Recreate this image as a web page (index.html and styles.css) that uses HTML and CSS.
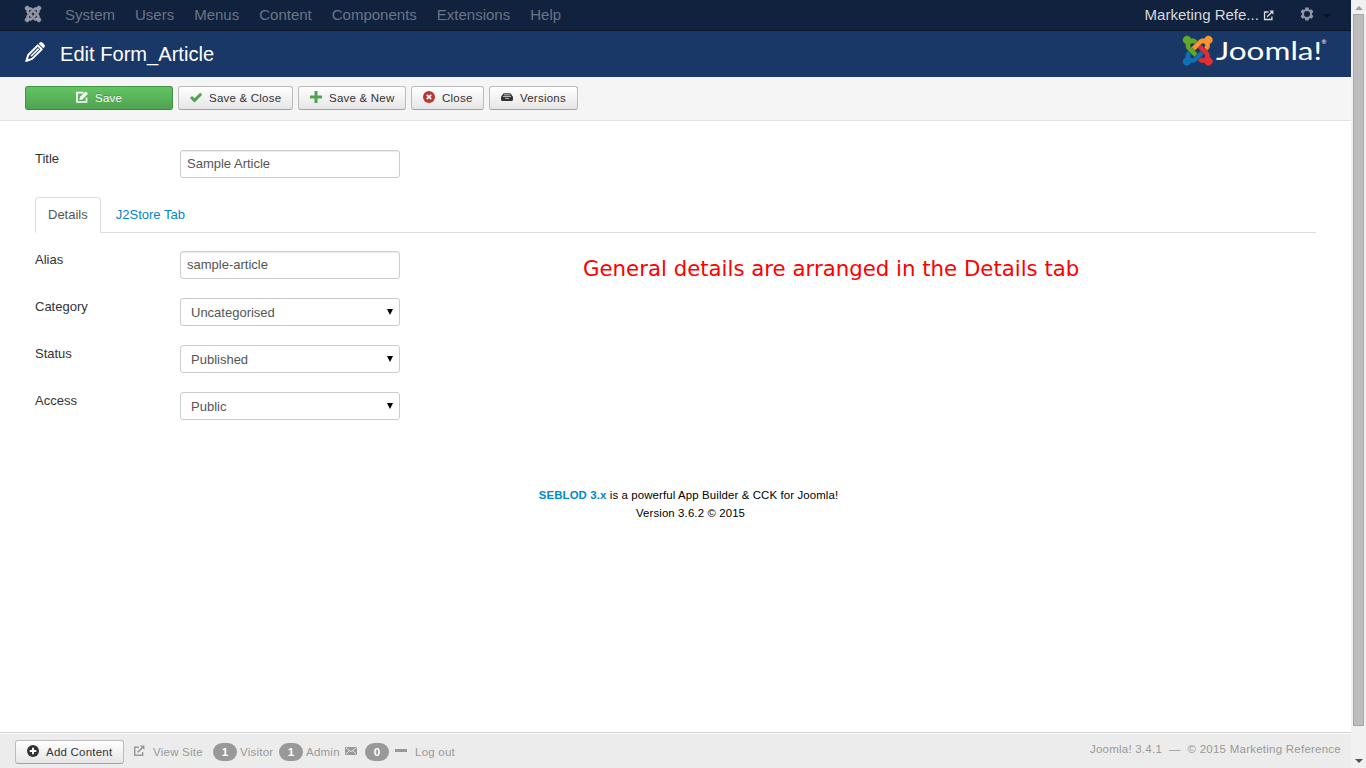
FILE: index.html
```html
<!DOCTYPE html>
<html lang="en">
<head>
<meta charset="utf-8">
<title>Edit Form_Article</title>
<link rel="stylesheet" href="styles.css">
</head>
<body>
<svg width="0" height="0" class="defs">
  <defs>
    <path id="arm" d="M16.72 14.76L14.22 17.26l-2.37 2.37-.46.47c-1.37 1.36-3.3 1.83-5.05 1.4-.33 1.42-1.6 2.49-3.13 2.49C1.44 23.98 0 22.55 0 20.77c0-1.52 1.05-2.79 2.47-3.12-.45-1.76.01-3.7 1.4-5.08l.18-.18 2.37 2.37-.19.18c-.77.78-.77 2.02 0 2.79.77.78 2.02.78 2.79 0l.46-.46 2.37-2.37 2.5-2.51z"/>
    <g id="external" fill="none" stroke="currentColor" stroke-width="1.5"><path d="M6 2.2H1.7v8.1h8V7.2M4.6 7.4L10 2"/><path d="M6.9.6h4.5v4.5z" fill="currentColor" stroke="none"/></g>
  </defs>
</svg>
<div class="window">
  <div class="page">
    <nav class="navbar">
      <svg class="brand" viewBox="0 0 24 24" fill="currentColor" stroke="currentColor" stroke-width=".9"><use href="#arm"/><use href="#arm" transform="rotate(90 12 12)"/><use href="#arm" transform="rotate(180 12 12)"/><use href="#arm" transform="rotate(270 12 12)"/></svg>
      <div class="menu"><a>System</a><a>Users</a><a>Menus</a><a>Content</a><a>Components</a><a>Extensions</a><a>Help</a></div>
      <a class="site">Marketing Refe... <svg width="11" height="11" viewBox="0 0 12 12"><use href="#external"/></svg></a>
      <svg class="gear" width="14" height="14" viewBox="0 0 14 14"><path fill="currentColor" fill-rule="evenodd" d="M5.400.5h3.200l.4 1.800 1 .6 1.800-.6 1.600 2.800-1.400 1.200v1.400l1.400 1.200-1.600 2.800-1.800-.6-1 .6-.4 1.800H5.400L5 11.700l-1-.6-1.800.6L.6 8.900 2 7.700V6.300L.6 5.100l1.600-2.800 1.800.6 1-.6zM7 4a3 3 0 1 0 0 6 3 3 0 0 0 0-6z"/></svg>
      <span class="caret"></span>
    </nav>
    <header class="header">
      <svg class="pencil" viewBox="0 0 20 20"><path d="M1.500 18.700L3.200 13 12.800 3.400 16.700 7.300 7.100 16.900z" fill="none" stroke="#fff" stroke-width="2" stroke-linejoin="round"/><path d="M13.600 1.600L15 .4Q16.300-.4 17.600.8L19.300 2.500Q20.300 3.800 19.500 5L18.300 6.300zM.3 19.900L1.600 15.400 4.800 18.500z" fill="#fff"/><path d="M6 14.200L13.600 6.600" stroke="#fff" stroke-width="1.500"/></svg>
      <h1>Edit Form_Article</h1>
      <svg class="logo" width="146" height="32" viewBox="0 0 146 32">
        <g transform="translate(1 1) scale(1.225)" stroke-width=".5"><use href="#arm" fill="#1170b3" stroke="#1170b3"/><use href="#arm" fill="#5fa82a" stroke="#5fa82a" transform="rotate(90 12 12)"/><use href="#arm" fill="#f9952e" stroke="#f9952e" transform="rotate(180 12 12)"/><use href="#arm" fill="#e72d2f" stroke="#e72d2f" transform="rotate(270 12 12)"/></g>
        <text x="34" y="25" font-family="Lato" font-size="24.500" fill="#fff" textLength="106" lengthAdjust="spacingAndGlyphs">Joomla!</text>
        <text x="139.500" y="9" font-family="Lato" font-size="6" fill="#fff">®</text>
      </svg>
    </header>
    <div class="toolbar">
      <button class="btn save"><svg width="12" height="12" viewBox="0 0 12 12"><path d="M7.500 1.600H1v9.400h9.500V6.500" fill="none" stroke="#fff" stroke-width="1.700"/><path d="M3.400 9l.6-3L9.700.4 12 2.700 6.300 8.400z" fill="#fff"/></svg>Save</button>
      <button class="btn w115"><svg width="12" height="12" viewBox="0 0 12 12"><path d="M1 6l3.500 3.400L11.200 2.700" fill="none" stroke="#51a351" stroke-width="2.900"/></svg>Save &amp; Close</button>
      <button class="btn w108"><svg width="12" height="12" viewBox="0 0 12 12"><path d="M6 0v12M0 6h12" stroke="#51a351" stroke-width="3"/></svg>Save &amp; New</button>
      <button class="btn w73"><svg width="12" height="12" viewBox="0 0 12 12"><circle cx="6" cy="6" r="6" fill="#bd362f"/><path d="M3.800 3.800l4.400 4.400M8.200 3.800L3.800 8.200" stroke="#fff" stroke-width="1.800"/></svg>Close</button>
      <button class="btn w89"><svg width="12" height="12" viewBox="0 0 13 12"><path d="M3.500 2h6q1 0 1.500 1l2 3v3q0 1.200-1.200 1.200H1.200Q0 10.200 0 9V6l2-3q.5-1 1.500-1z" fill="#333"/><path d="M3.200 3.600h6.600M2.200 5.400h8.600M4.500 7.500h4" stroke="#ddd" stroke-width=".9"/></svg>Versions</button>
    </div>
    <main class="content">
      <div class="row title-row"><label>Title</label><div class="field">Sample Article</div></div>
      <div class="tabs"><a class="tab active">Details</a><a class="tab">J2Store Tab</a></div>
      <div class="columns">
        <div class="form">
          <div class="row"><label>Alias</label><div class="field">sample-article</div></div>
          <div class="row"><label>Category</label><div class="field select">Uncategorised</div></div>
          <div class="row"><label>Status</label><div class="field select">Published</div></div>
          <div class="row"><label>Access</label><div class="field select">Public</div></div>
        </div>
        <p class="note">General details are arranged in the Details tab</p>
      </div>
      <div class="credit"><div class="credit-main"><b>SEBLOD 3.x</b> is a powerful App Builder &amp; CCK for Joomla!</div><div>Version 3.6.2 © 2015</div></div>
    </main>
    <footer class="status">
      <button class="btn add"><svg width="12" height="12" viewBox="0 0 12 12"><circle cx="6" cy="6" r="6" fill="#333"/><path d="M6 2.700v6.600M2.700 6h6.600" stroke="#fff" stroke-width="1.900"/></svg>Add Content</button>
      <svg class="view-icon" width="12" height="12" viewBox="0 0 12 12"><use href="#external"/></svg>
      <span class="view">View Site</span>
      <span class="badge">1</span><span class="visitor">Visitor</span>
      <span class="badge">1</span><span class="admin">Admin</span>
      <svg class="mail" width="12" height="8" viewBox="0 0 12 8"><path d="M0 0h12v8H0z" fill="#999"/><path d="M.7.700L6 4.700 11.300.7M.7 7.300L4 4M11.300 7.300L8 4" fill="none" stroke="#eee" stroke-width=".9"/></svg>
      <span class="badge">0</span><span class="dash"></span><span>Log out</span>
      <span class="copyright">Joomla! 3.4.1 &nbsp;—&nbsp; © 2015 Marketing Reference</span>
    </footer>
  </div>
  <div class="scrollbar"><i class="up"></i><i class="thumb"></i><i class="down"></i></div>
</div>
</body>
</html>
```
FILE: styles.css
```css
* { box-sizing: border-box; }
body { margin: 0; font: 13px/18px "Liberation Sans", Arial, sans-serif; color: #333; background: #fff; }
.defs { display: block; }
svg { flex: none; }
.window { display: flex; width: 1366px; height: 768px; overflow: hidden; }
.page { display: flex; flex-direction: column; width: 1351px; }
.navbar { display: flex; height: 31px; flex: none; padding-left: 25px; background: #10223e; border-bottom: 1px solid #0b182c; font-size: 15px; line-height: 30px; color: #6b7585; }
.brand { margin: 6px 13px 0 0; color: #949ba7; width: 16px; height: 16px; overflow: visible; }
.menu { display: flex; margin-left: 1px; }
.menu a { padding: 0 10px; }
.site { margin-left: auto; color: #d9d9d9; }
.site svg { vertical-align: -1px; }
.gear { margin: 7px 0 0 26px; color: #8e97a4; }
.caret { margin: 14px 20px 0 9px; width: 8px; height: 4px; border: 4px solid transparent; border-top-color: #081121; border-bottom: 0; }
.header { display: flex; flex: none; height: 46px; padding-left: 25px; background: #1a3867; color: #fff; }
.pencil { margin-top: 11px; width: 20px; height: 20px; }
h1 { margin: 0 0 0 15px; font-size: 20.1px; line-height: 46px; font-weight: 400; }
.logo { margin: 4px 23px 0 auto; }
.toolbar { display: flex; flex: none; gap: 5px; height: 44px; padding: 9px 25px; background: #f5f5f5; border-bottom: 1px solid #e3e3e3; }
.btn { display: flex; align-items: center; height: 24px; margin: 0; padding: 0 0 0 11px; border: 1px solid #bbb; border-bottom-color: #a2a2a2; border-radius: 3px; background: linear-gradient(#fff, #e6e6e6); font: 11.5px/22px "Liberation Sans", Arial, sans-serif; letter-spacing: .22px; color: #333; white-space: nowrap; }
.btn svg { margin-right: 7px; position: relative; top: -1px; }
.save { width: 148px; padding: 0 0 0 50px; border-color: #419641 #419641 #3b873b; background: linear-gradient(#62c462, #51a351); color: #fff; text-shadow: 0 -1px 0 rgba(0,0,0,.25); }
.w115 { width: 115px; }
.w108 { width: 108px; }
.w73 { width: 73px; }
.w89 { width: 89px; }
.content { flex: 1; padding: 29px 35px 0; }
.row { display: flex; height: 47px; }
.row label { width: 145px; }
.field { width: 220px; height: 28px; padding: 4px 6px; border: 1px solid #ccc; border-radius: 3px; box-shadow: inset 0 1px 1px rgba(0,0,0,.075); color: #555; }
.select { display: flex; justify-content: space-between; padding: 5px 6px 0 10px; box-shadow: none; }
.select::after { content: ""; width: 6px; height: 6px; margin-top: 5px; background: #000; clip-path: polygon(0 0, 100% 0, 50% 100%); }
.tabs { display: flex; height: 36px; border-bottom: 1px solid #ddd; }
.tab { height: 36px; padding: 8px 12px; line-height: 18px; color: #08c; border: 1px solid transparent; }
.tab + .tab { margin-left: 2px; }
.active { color: #555; background: #fff; border-color: #ddd #ddd #fff; border-radius: 4px 4px 0 0; }
.columns { display: flex; padding-top: 18px; }
.form { width: 548px; }
.note { margin: 4px 0 0; font: 21.29px/27px "DejaVu Sans", sans-serif; color: #f00; white-space: nowrap; }
.credit { margin-top: 47px; padding-left: 30px; text-align: center; font-size: 11.4px; letter-spacing: .13px; color: #000; }
.credit-main { margin-left: -4px; }
.credit b { color: #08c; }
.status { display: flex; align-items: center; flex: none; height: 36px; padding: 3px 10px 0 15px; background: #ececec; border-top: 1px solid #d4d4d4; box-shadow: inset 0 1px #fafafa; font-size: 11.5px; letter-spacing: .24px; color: #999; }
.add { width: 109px; margin-right: 9px; }
.view-icon { margin: -3px 8px 0 0; color: #999; }
.view { width: 50px; margin-right: 10px; white-space: nowrap; }
.badge { width: 24px; height: 18px; border-radius: 9px; background: #999; color: #fff; text-align: center; font-weight: 700; }
.visitor { width: 34px; margin: 0 5px 0 3px; }
.admin { width: 34px; margin: 0 5px 0 3px; }
.mail { margin: -2px 8px 0 0; }
.dash { width: 12px; height: 3px; margin: -3px 8px 0 6px; background: #999; }
.copyright { margin: -6px 0 0 auto; }
.scrollbar { display: flex; flex-direction: column; align-items: center; width: 15px; background: #f1f1f1; }
.up { width: 8px; border: 4px solid transparent; border-bottom-color: #a0a0a0; border-top: 0; margin: 6px 0 4px; }
.thumb { width: 11px; height: 712px; background: #bcbcbc; border: 1px solid #a8a8a8; }
.down { width: 8px; margin-top: 33px; border: 4px solid transparent; border-top-color: #505050; border-bottom: 0; }
```
